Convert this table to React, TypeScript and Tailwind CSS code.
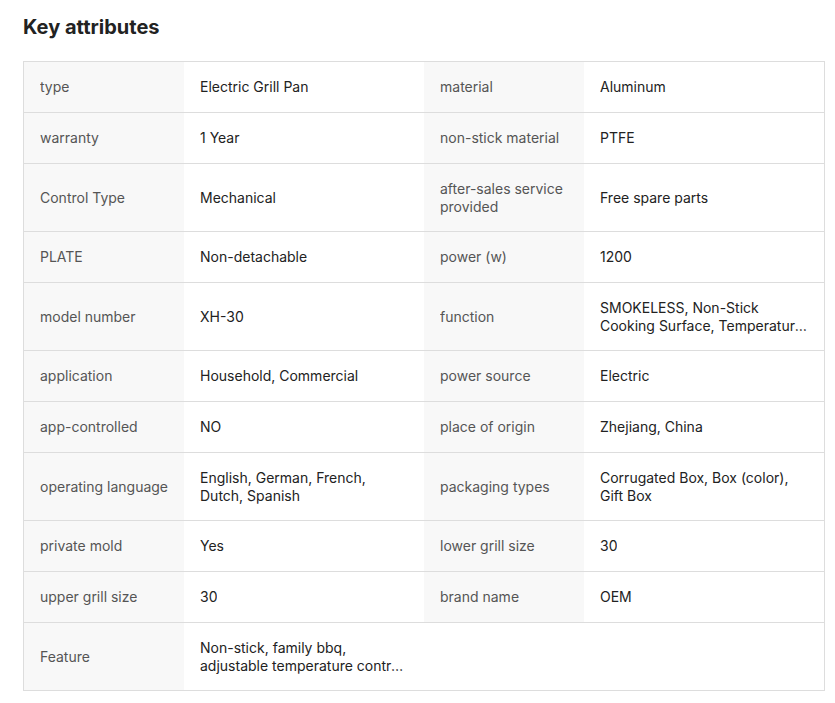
import React from "react";

const rows: [string, string, string?, string?][] = [
  ["type", "Electric Grill Pan", "material", "Aluminum"],
  ["warranty", "1 Year", "non-stick material", "PTFE"],
  ["Control Type", "Mechanical", "after-sales service provided", "Free spare parts"],
  ["PLATE", "Non-detachable", "power (w)", "1200"],
  ["model number", "XH-30", "function", "SMOKELESS, Non-Stick Cooking Surface, Temperature Control, Adjustable"],
  ["application", "Household, Commercial", "power source", "Electric"],
  ["app-controlled", "NO", "place of origin", "Zhejiang, China"],
  ["operating language", "English, German, French, Dutch, Spanish", "packaging types", "Corrugated Box, Box (color), Gift Box"],
  ["private mold", "Yes", "lower grill size", "30"],
  ["upper grill size", "30", "brand name", "OEM"],
  ["Feature", "Non-stick, family bbq, adjustable temperature control, easy clean"],
];

function Label({ text }: { text: string }) {
  return (
    <div className="w-[160px] min-h-[50px] shrink-0 bg-[#f8f8f8] pl-4 pr-2 py-4 flex items-center text-[#555555]">
      <span className="line-clamp-2">{text}</span>
    </div>
  );
}

function Value({ text }: { text: string }) {
  return (
    <div className="w-[240px] min-h-[50px] shrink-0 bg-white px-4 py-4 flex items-center text-[#222222]">
      <span className="line-clamp-2">{text}</span>
    </div>
  );
}

export default function App() {
  return (
    <div
      className="bg-white min-h-[703px] pl-[23px] pt-[13px]"
      style={{ fontFamily: "Inter, 'Noto Sans', sans-serif" }}
    >
      <h2 className="text-[20px] leading-[28px] font-bold text-[#222222]">Key attributes</h2>
      <div className="mt-[20px] w-[802px] border border-[#dddddd] text-[14px] leading-[17.5px]">
        {rows.map((r, i) => (
          <div
            key={i}
            className={`flex ${i < rows.length - 1 ? "border-b border-[#dddddd]" : ""}`}
          >
            <Label text={r[0]} />
            <Value text={r[1]} />
            {r[2] !== undefined ? (
              <>
                <Label text={r[2]} />
                <Value text={r[3] ?? ""} />
              </>
            ) : (
              <div className="flex-1 bg-white" />
            )}
          </div>
        ))}
      </div>
    </div>
  );
}
